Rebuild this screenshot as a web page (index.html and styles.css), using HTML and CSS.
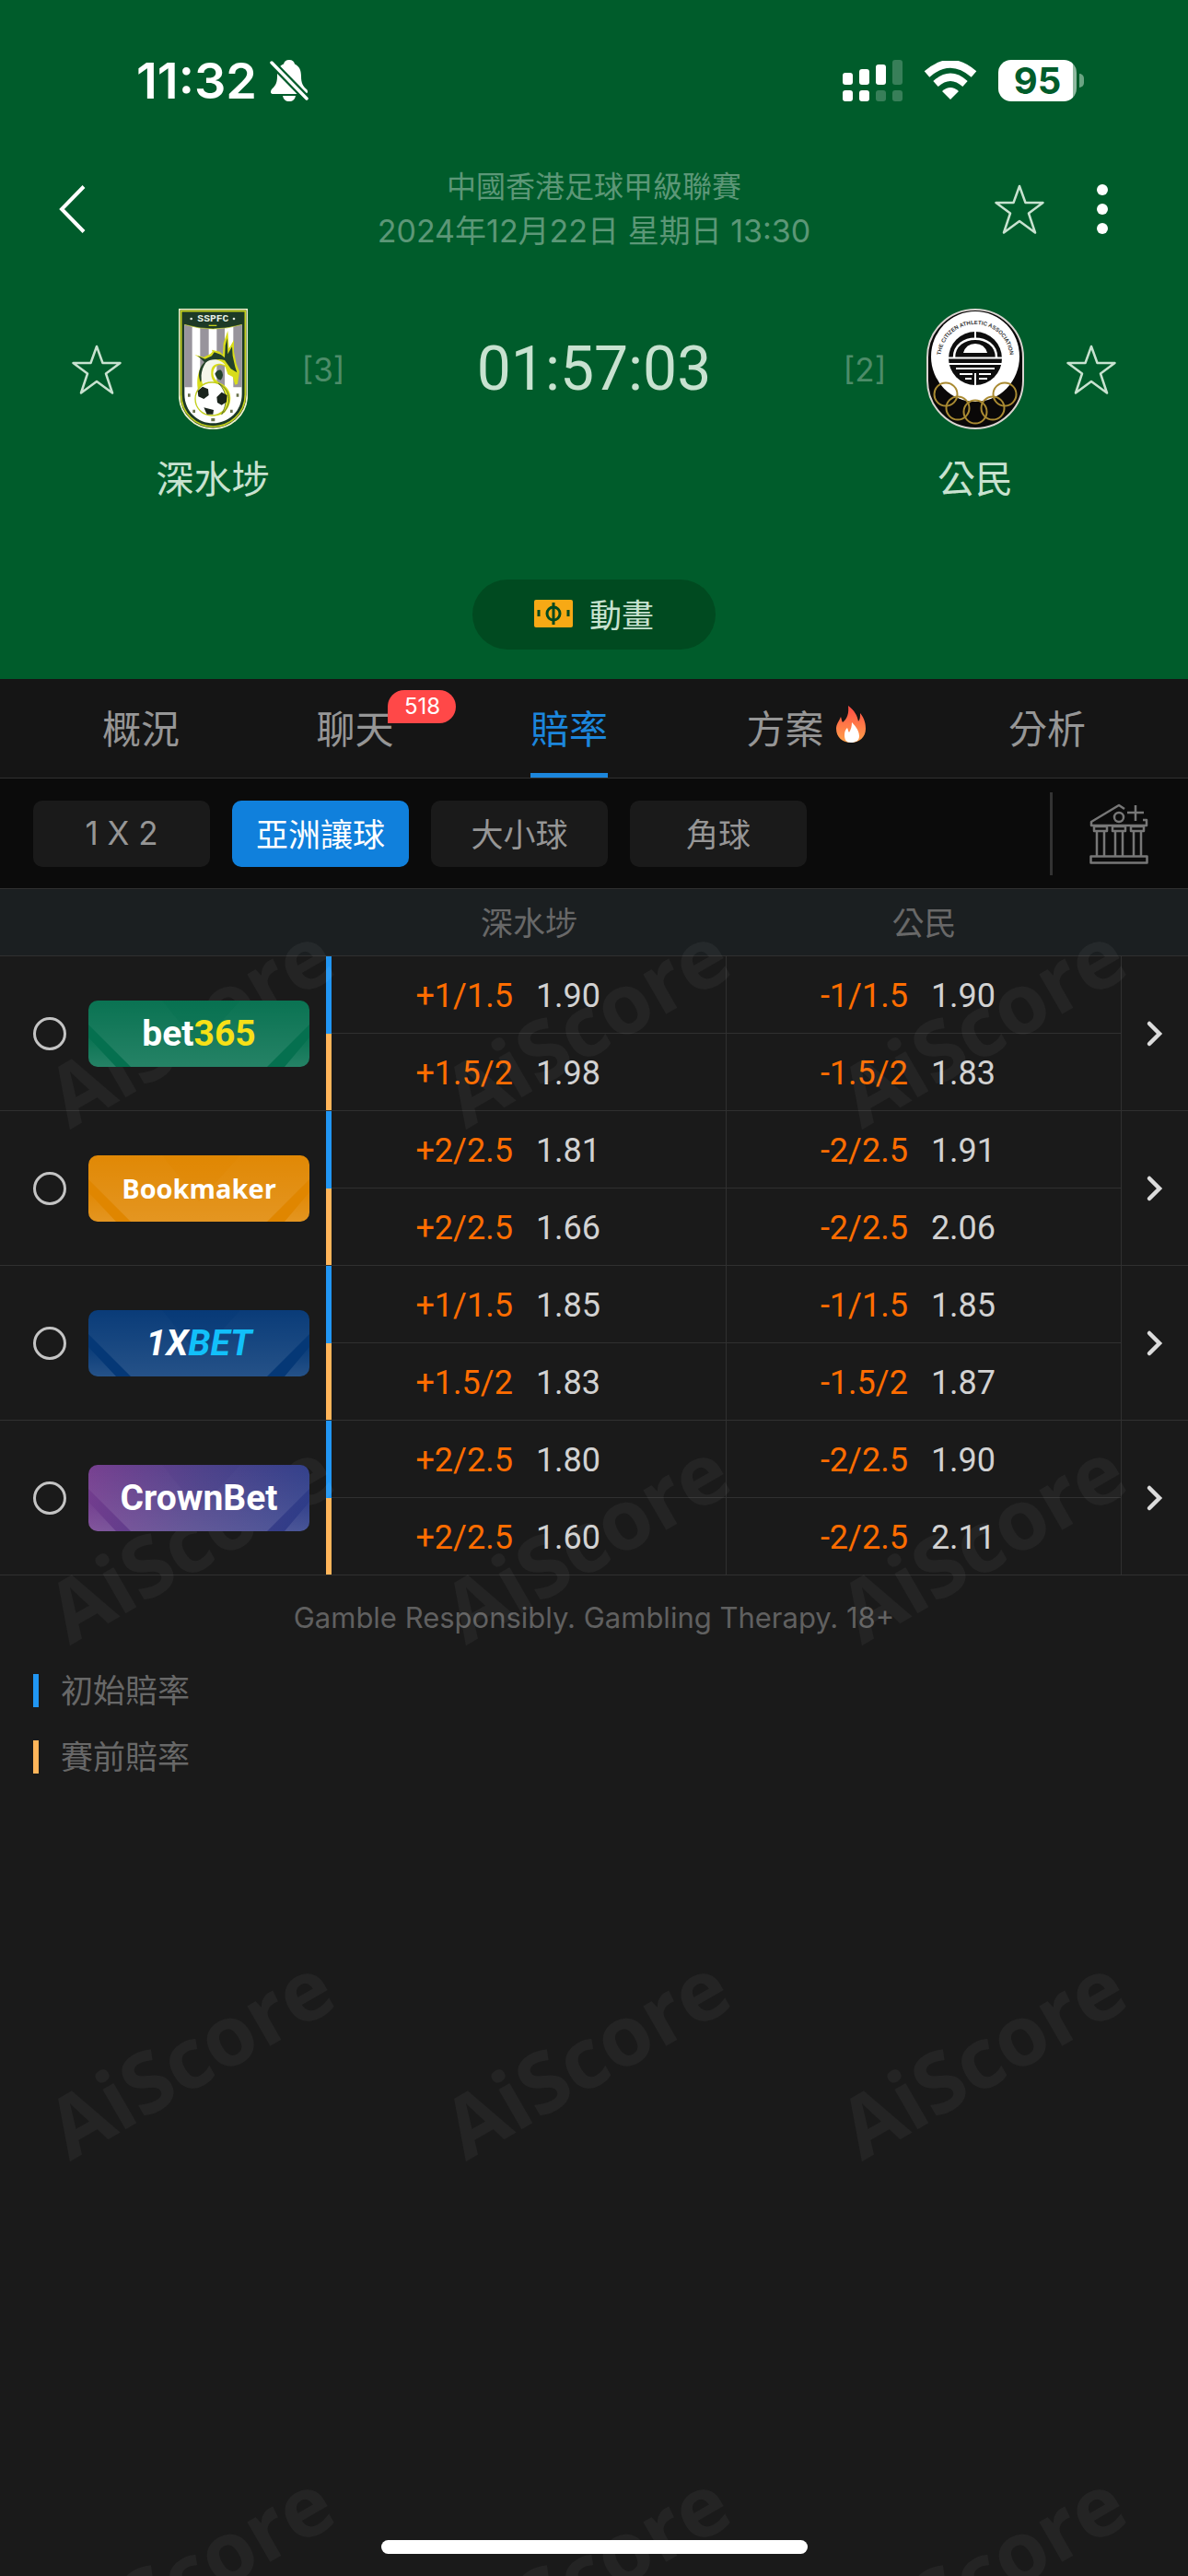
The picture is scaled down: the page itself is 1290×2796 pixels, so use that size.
FILE: index.html
```html
<!DOCTYPE html>
<html lang="zh-Hant">
<head>
    <meta charset="UTF-8">
    <meta name="viewport" content="width=device-width, initial-scale=1.0">
    <title>深水埗 - 公民</title>
    <link rel="stylesheet" href="styles.css">
</head>
<body>
    <!-- shared shapes -->
    <svg class="defs" width="0" height="0" aria-hidden="true">
        <defs>
            <linearGradient id="shine" x1="0" y1="0" x2="0" y2="1">
                <stop offset="0" stop-color="#fff" stop-opacity="0.02"/>
                <stop offset="1" stop-color="#fff" stop-opacity="0.13"/>
            </linearGradient>
            <linearGradient id="flame" x1="0" y1="0" x2="0" y2="1">
                <stop offset="0" stop-color="#ff4b45"/>
                <stop offset="1" stop-color="#ffa24a"/>
            </linearGradient>
        </defs>
        <symbol id="star" viewBox="0 0 54 54">
            <path d="M27 2L33.500 20H52.500L37 31.500L44 52.500L27 40L10 52.500L17 31.500L1.500 20H20.500Z" fill="none" stroke="currentColor" stroke-width="2.500" stroke-linejoin="round"/>
        </symbol>
        <symbol id="arrow" viewBox="0 0 20 30">
            <path d="M4 4L15 15L4 26" fill="none" stroke="currentColor" stroke-width="4.500" stroke-linecap="round"/>
        </symbol>
        <symbol id="plate" viewBox="0 0 240 72">
            <path d="M0 0H80L120 50L165 0H240V26L194 72H46L0 26Z" fill="url(#shine)"/>
            <path d="M80 0H165L120 50Z" fill="url(#shine)" opacity="0.5"/>
            <path d="M0 40L30 72H0ZM240 40V72H213Z" fill="url(#shine)"/>
        </symbol>
    </svg>

    <header class="match-header">
        <div class="status-bar">
            <div class="clock">
                <span>11:32</span>
                <svg class="bell" viewBox="0 0 42 46">
                    <path d="M21 1C17.500 1 15.500 3 15 5.500C9 8 8 13 8 19C8 27 5 30 2 33C0 36 1 38 4 38H38C41 38 42 35 40 33C36 30 34 26 34 19C34 12 32 8 27 5.500C26.500 3 24.500 1 21 1Z" fill="#fff"/>
                    <path d="M14 40H28C27 44 25 46 21 46S15 44 14 40Z" fill="#fff"/>
                    <path d="M2 4L40 43" stroke="#005c2b" stroke-width="8"/>
                    <path d="M2 4L40 43" stroke="#fff" stroke-width="3.500" stroke-linecap="round"/>
                </svg>
            </div>
            <div class="indicators">
                <svg class="signal" viewBox="0 0 65 45" fill="#fff">
                    <rect x="0" y="14" width="11" height="13" rx="3"/>
                    <rect x="18" y="10" width="11" height="17" rx="3"/>
                    <rect x="36" y="5" width="11" height="22" rx="3"/>
                    <rect x="54" y="0" width="11" height="27" rx="3" opacity="0.22"/>
                    <rect x="0" y="33" width="11" height="12" rx="3"/>
                    <rect x="18" y="33" width="11" height="12" rx="3"/>
                    <rect x="36" y="33" width="11" height="12" rx="3" opacity="0.22"/>
                    <rect x="54" y="33" width="11" height="12" rx="3" opacity="0.22"/>
                </svg>
                <svg class="wifi" viewBox="0 0 58 42">
                    <path d="M3.500 14.500Q29 -8 54.500 14.500" fill="none" stroke="#fff" stroke-width="8.500"/>
                    <path d="M13 25Q29 10.500 45 25" fill="none" stroke="#fff" stroke-width="8"/>
                    <path d="M20 33Q29 25 38 33L29 42Z" fill="#fff"/>
                </svg>
                <div class="battery"><span>95</span></div>
            </div>
        </div>

        <nav class="match-nav">
            <button class="icon-btn back" aria-label="返回">
                <svg viewBox="0 0 30 52"><path d="M28 1.500L4 26L28 50.500" fill="none" stroke="#fff" stroke-width="4"/></svg>
            </button>
            <div class="league">
                <div>中國香港足球甲級聯賽</div>
                <div class="kickoff">2024年12月22日 星期日 13:30</div>
            </div>
            <div class="nav-actions">
                <button class="icon-btn fav" aria-label="收藏"><svg><use href="#star"/></svg></button>
                <button class="icon-btn more" aria-label="更多"><i></i><i></i><i></i></button>
            </div>
        </nav>

        <section class="scoreboard">
            <button class="icon-btn fav" aria-label="收藏深水埗"><svg><use href="#star"/></svg></button>
            <svg class="crest-home" viewBox="0 0 225 393">
                <path d="M2 2H223V280C223 345 170 391 112 391S2 345 2 280Z" fill="#1d3a26" stroke="#f3f5cf" stroke-width="5"/>
                <path d="M8 8H217V280C217 342 166 384 112 384S8 342 8 280Z" fill="none" stroke="#c3cf1c" stroke-width="5"/>
                <path d="M19 52Q112 80 206 52V278C206 336 160 373 112 373S19 336 19 278Z" fill="#fff"/>
                <path d="M19 52L44 59V256H19ZM70 63L98 66V256H70ZM124 66L150 63V256H124ZM178 59L206 52V256H178Z" fill="#98949c"/>
                <path d="M19 52Q112 80 206 52" fill="none" stroke="#c3cf1c" stroke-width="2"/>
                <text x="112" y="42" text-anchor="middle" class="crest-text">SSPFC</text>
                <circle cx="41" cy="33" r="4" fill="#dfe8dc"/>
                <circle cx="180" cy="33" r="4" fill="#dfe8dc"/>
                <path d="M98 55H124" stroke="#c3cf1c" stroke-width="4"/>
                <!-- dragon -->
                <path d="M52 150L82 158C95 150 103 150 110 140L108 134L134 140L144 150L146 112L160 72L164 130L180 102V140L188 180L198 205L192 245L184 248L176 222L160 214L152 190C140 178 120 182 114 200C108 220 120 236 138 244C178 262 176 310 150 338C124 356 92 350 76 334L62 260C56 220 70 186 88 172Z" fill="#d8dc1a"/>
                <path d="M62 154L86 164L108 154L116 142L138 150L150 160L152 120L158 96L160 148L174 124L176 154L184 190L190 208L170 196L150 168C118 158 92 176 82 200L72 240C58 210 72 186 84 174Z" fill="#23412a"/>
                <path d="M88 176C110 158 138 166 152 184C124 172 106 184 106 206C104 226 114 240 128 250L88 262C66 234 72 200 88 176Z" fill="#f4f6ea"/>
                <path d="M118 212Q126 198 138 200Q150 214 138 232Q126 234 118 212Z" fill="#23412a"/>
                <circle cx="108" cy="294" r="54" fill="#fff" stroke="#c3cf1c" stroke-width="4"/>
                <path d="M130 244C176 268 170 318 140 344C158 312 160 272 130 244Z" fill="#e4e82a" stroke="#23412a" stroke-width="2"/>
                <path d="M62 268L78 254L96 262L98 282L82 294L64 286ZM124 288L140 272L158 282L156 304L140 314L126 306ZM82 322L114 330L112 344H92Z" fill="#1a241c"/>
                <path d="M30 282H38M188 282H196M46 334H54M168 334H176M106 362H118" stroke="#68714b" stroke-width="10"/>
            </svg>
            <span class="rank">[3]</span>
            <div class="countdown">01:57:03</div>
            <span class="rank">[2]</span>
            <svg class="crest-away" viewBox="0 0 106 131">
                <defs><path id="arc" d="M15 62C11 2 95 2 91 62"/></defs>
                <rect x="1" y="1" width="104" height="129" rx="52" fill="#0a0808" stroke="#d9d4d0" stroke-width="2"/>
                <ellipse cx="53" cy="52" rx="48" ry="49" fill="#fff"/>
                <text class="arc-text"><textPath href="#arc" startOffset="50%" text-anchor="middle">THE CITIZEN ATHLETIC ASSOCIATION</textPath></text>
                <circle cx="53" cy="54" r="29" fill="#0d0d0d"/>
                <g stroke="#fff" fill="none">
                    <path d="M53 24V33M24 53.500H82M24 60H34M72 60H82M53 70V84" stroke-width="2"/>
                    <path d="M30 53C30 26 76 26 76 53" stroke-width="2.500"/>
                    <path d="M34 60H72M32 65H74M36 71H50M57 71H70M42 76H49M57 76H66" stroke-width="2"/>
                </g>
                <path d="M40 48Q43 38 53 38T66 48Z" fill="#fff"/>
                <g fill="none" stroke="#a98a32" stroke-width="2">
                    <circle cx="21" cy="93" r="12.500"/>
                    <circle cx="34" cy="108" r="12.500"/>
                    <circle cx="53" cy="112" r="12.500"/>
                    <circle cx="72" cy="108" r="12.500"/>
                    <circle cx="85" cy="93" r="12.500"/>
                </g>
            </svg>
            <button class="icon-btn fav" aria-label="收藏公民"><svg><use href="#star"/></svg></button>
            <div class="team-name home">深水埗</div>
            <div class="team-name away">公民</div>
        </section>

        <button class="live-btn">
            <svg viewBox="0 0 42 30">
                <rect width="42" height="30" rx="2" fill="#f7a915"/>
                <path d="M21 3V27M5 11V18M37 11V18" stroke="#00491f" stroke-width="3"/>
                <circle cx="21" cy="15" r="7" fill="none" stroke="#00491f" stroke-width="3"/>
            </svg>
            動畫
        </button>
    </header>

    <nav class="tabs">
        <a href="#">概況</a>
        <a href="#">聊天<span class="badge">518</span></a>
        <a href="#" class="active">賠率</a>
        <a href="#" class="hot">方案
            <svg class="fire" viewBox="0 0 32 40">
                <path d="M13 0C20 5 23 11 24 17C26 15 26 12 26 8C31 14 32 20 32 25C32 34 25 40 16 40S0 34 0 25C0 20 3 17 5 12C6 15 6 17 7 18C12 14 14 8 13 0Z" fill="url(#flame)"/>
                <path d="M17 18C22 23 25 28 25 33C25 38 21 40 16 40S9 37 9 32C9 28 10 26 12 24C13 26 13 28 14 29C16 26 17 22 17 18Z" fill="#fff"/>
            </svg>
        </a>
        <a href="#">分析</a>
    </nav>

    <div class="filters">
        <button>1 X 2</button>
        <button class="active">亞洲讓球</button>
        <button>大小球</button>
        <button>角球</button>
        <button class="icon-btn company" aria-label="選擇公司">
            <svg viewBox="0 0 64 66" fill="none" stroke="#777" stroke-width="2.500" stroke-linejoin="round">
                <path d="M38 6L32 2L2 20V24H62V18H58M50 2V19M41 10H59"/>
                <circle cx="32" cy="15" r="5"/>
                <path d="M5 25H19V30H5ZM25 25H39V30H25ZM45 25H59V30H45Z"/>
                <path d="M8 30V57M16 30V57M28 30V57M36 30V57M48 30V57M56 30V57"/>
                <rect x="1.500" y="57.500" width="61" height="7"/>
            </svg>
        </button>
    </div>

    <main class="odds">
        <table class="odds-table">
            <colgroup>
                <col class="col-company">
                <col>
                <col>
                <col class="col-more">
            </colgroup>
            <thead>
                <tr>
                    <th></th>
                    <th>深水埗</th>
                    <th>公民</th>
                    <th></th>
                </tr>
            </thead>
            <tbody>
                <tr>
                    <td rowspan="2"><label class="company-cell"><input type="radio" name="company"><span class="logo bet365"><svg><use href="#plate"/></svg><b>bet<em>365</em></b></span></label></td>
                    <td><div class="pair"><span>+1/1.5</span><strong>1.90</strong></div></td>
                    <td><div class="pair"><span>-1/1.5</span><strong>1.90</strong></div></td>
                    <td rowspan="2"><button class="icon-btn go" aria-label="bet365"><svg><use href="#arrow"/></svg></button></td>
                </tr>
                <tr>
                    <td><div class="pair"><span>+1.5/2</span><strong>1.98</strong></div></td>
                    <td><div class="pair"><span>-1.5/2</span><strong>1.83</strong></div></td>
                </tr>
                <tr>
                    <td rowspan="2"><label class="company-cell"><input type="radio" name="company"><span class="logo bookmaker"><svg><use href="#plate"/></svg><b>Bookmaker</b></span></label></td>
                    <td><div class="pair"><span>+2/2.5</span><strong>1.81</strong></div></td>
                    <td><div class="pair"><span>-2/2.5</span><strong>1.91</strong></div></td>
                    <td rowspan="2"><button class="icon-btn go" aria-label="Bookmaker"><svg><use href="#arrow"/></svg></button></td>
                </tr>
                <tr>
                    <td><div class="pair"><span>+2/2.5</span><strong>1.66</strong></div></td>
                    <td><div class="pair"><span>-2/2.5</span><strong>2.06</strong></div></td>
                </tr>
                <tr>
                    <td rowspan="2"><label class="company-cell"><input type="radio" name="company"><span class="logo onexbet"><svg><use href="#plate"/></svg><b>1X<em>BET</em></b></span></label></td>
                    <td><div class="pair"><span>+1/1.5</span><strong>1.85</strong></div></td>
                    <td><div class="pair"><span>-1/1.5</span><strong>1.85</strong></div></td>
                    <td rowspan="2"><button class="icon-btn go" aria-label="1XBET"><svg><use href="#arrow"/></svg></button></td>
                </tr>
                <tr>
                    <td><div class="pair"><span>+1.5/2</span><strong>1.83</strong></div></td>
                    <td><div class="pair"><span>-1.5/2</span><strong>1.87</strong></div></td>
                </tr>
                <tr>
                    <td rowspan="2"><label class="company-cell"><input type="radio" name="company"><span class="logo crownbet"><svg><use href="#plate"/></svg><b>CrownBet</b></span></label></td>
                    <td><div class="pair"><span>+2/2.5</span><strong>1.80</strong></div></td>
                    <td><div class="pair"><span>-2/2.5</span><strong>1.90</strong></div></td>
                    <td rowspan="2"><button class="icon-btn go" aria-label="CrownBet"><svg><use href="#arrow"/></svg></button></td>
                </tr>
                <tr>
                    <td><div class="pair"><span>+2/2.5</span><strong>1.60</strong></div></td>
                    <td><div class="pair"><span>-2/2.5</span><strong>2.11</strong></div></td>
                </tr>
            </tbody>
        </table>

        <p class="notice">Gamble Responsibly. Gambling Therapy. 18+</p>

        <ul class="legend">
            <li>初始賠率</li>
            <li class="pre">賽前賠率</li>
        </ul>

        <div class="home-indicator"></div>

        <svg class="watermark" aria-hidden="true">
            <defs>
                <pattern id="mark" width="430" height="560" y="58" patternUnits="userSpaceOnUse">
                    <text x="76" y="204" transform="rotate(-30 76 204)">AiScore</text>
                </pattern>
            </defs>
            <rect y="58" width="100%" height="100%" fill="url(#mark)"/>
        </svg>
    </main>
</body>
</html>
```
FILE: styles.css
```css
* {
    margin: 0;
    padding: 0;
    box-sizing: border-box;
}

body {
    min-height: 100vh;
    display: flex;
    flex-direction: column;
    background: #1a1a1a;
    color: #969696;
    font-family: Inter, "Noto Sans CJK TC", sans-serif;
    font-size: 35px;
}

button {
    border: none;
    background: none;
    color: inherit;
    font: inherit;
    cursor: pointer;
}

a {
    color: inherit;
    text-decoration: none;
}

svg {
    display: block;
}

.defs {
    position: absolute;
}

.icon-btn svg {
    width: 100%;
    height: 100%;
}

/* header */
.match-header {
    background: #005c2b;
    color: #c8e2d0;
    padding-bottom: 32px;
}

.status-bar {
    height: 174px;
    padding: 0 113px 0 148px;
    display: flex;
    justify-content: space-between;
    align-items: center;
    color: #fff;
}

.clock {
    display: flex;
    align-items: center;
    gap: 14px;
    font-size: 54px;
    font-weight: 600;
}

.bell {
    width: 42px;
    height: 46px;
}

.indicators {
    display: flex;
    align-items: center;
    gap: 23px;
}

.signal {
    width: 65px;
    height: 45px;
}

.wifi {
    width: 58px;
    height: 42px;
}

.battery {
    position: relative;
    width: 85px;
    height: 45px;
    margin-right: 8px;
    border-radius: 14px;
    background: linear-gradient(90deg, #fff 81px, #8fb89f 81px);
    color: #005c2b;
    font-size: 40px;
    font-weight: 700;
    line-height: 45px;
    text-align: center;
}

.battery::after {
    content: "";
    position: absolute;
    right: -8px;
    top: 15px;
    width: 5px;
    height: 15px;
    border-radius: 0 5px 5px 0;
    background: #6ba483;
}

.match-nav {
    height: 106px;
    padding: 0 63px;
    display: grid;
    grid-template-columns: 1fr auto 1fr;
    align-items: center;
}

.back {
    width: 30px;
    height: 52px;
}

.league {
    color: #5c9777;
    font-size: 32px;
    line-height: 48px;
    text-align: center;
}

.kickoff {
    font-size: 34px;
}

.nav-actions {
    justify-self: end;
    display: flex;
    align-items: center;
    gap: 57px;
    margin-right: 24px;
}

.fav {
    width: 54px;
    height: 54px;
}

.more {
    height: 54px;
    display: flex;
    flex-direction: column;
    justify-content: space-between;
}

.more i {
    width: 12px;
    height: 12px;
    border-radius: 50%;
    background: #fff;
}

.scoreboard {
    margin-top: 55px;
    padding: 0 78px;
    display: grid;
    grid-template-columns: 54px 124px 42px 1fr 42px 124px 54px;
    grid-template-rows: 131px 50px;
    column-gap: 37px;
    row-gap: 29px;
    align-items: center;
    justify-items: center;
}

.crest-home {
    width: 75px;
    height: 131px;
}

.crest-text {
    fill: #e6efe4;
    font-family: "Liberation Mono", monospace;
    font-size: 34px;
    font-weight: 700;
}

.crest-away {
    width: 106px;
    height: 131px;
}

.arc-text {
    fill: #333;
    font-family: "Liberation Sans", sans-serif;
    font-size: 6px;
    font-weight: 700;
}

.rank {
    color: #4d8c69;
    font-size: 35px;
    white-space: nowrap;
}

.countdown {
    font-family: Roboto, sans-serif;
    font-size: 66px;
}

.team-name {
    font-size: 41px;
    line-height: 50px;
}

.team-name.home {
    grid-column: 2;
}

.team-name.away {
    grid-column: 6;
}

.live-btn {
    margin: 84px auto 0;
    width: 264px;
    height: 76px;
    padding-bottom: 3px;
    display: flex;
    justify-content: center;
    align-items: center;
    gap: 18px;
    border-radius: 38px;
    background: #004a20;
}

.live-btn svg {
    width: 42px;
    height: 30px;
}

/* tabs */
.tabs {
    height: 108px;
    padding: 0 111px;
    display: flex;
    justify-content: space-between;
    background: #151515;
    border-bottom: 1px solid #303030;
    font-size: 42px;
}

.tabs a {
    position: relative;
    display: flex;
    align-items: center;
    gap: 14px;
    padding-bottom: 4px;
}

.tabs .active {
    color: #1c86dc;
    border-bottom: 5px solid #1c86dc;
    border-top: 5px solid transparent;
}

.tabs .hot {
    padding-left: 2px;
    padding-right: 6px;
}

.badge {
    position: absolute;
    left: 78px;
    top: 12px;
    width: 74px;
    height: 36px;
    border-radius: 18px 18px 18px 0;
    background: #ff4848;
    color: #fff;
    font-size: 24px;
    line-height: 36px;
    text-align: center;
}

.fire {
    width: 32px;
    height: 40px;
    margin-bottom: 6px;
}

/* filters */
.filters {
    height: 119px;
    padding-left: 36px;
    display: flex;
    align-items: center;
    gap: 24px;
    background: #0b0b0b;
}

.filters button:not(.company) {
    width: 192px;
    height: 72px;
    padding-bottom: 2px;
    border-radius: 10px;
    background: #1a1a1a;
}

.filters button.active:not(.company) {
    background: #1080dc;
    color: #fff;
}

.filters .company {
    margin-left: auto;
    width: 150px;
    height: 90px;
    padding: 12px 43px 12px 40px;
    border-left: 3px solid #333;
}

/* odds */
.odds {
    position: relative;
    flex: 1;
    display: flex;
    flex-direction: column;
    overflow: hidden;
}

.odds-table {
    width: 100%;
    table-layout: fixed;
    border-spacing: 0;
    font-family: Roboto, "Noto Sans CJK TC", sans-serif;
}

.col-company {
    width: 360px;
}

.col-more {
    width: 72px;
}

.odds-table th {
    height: 74px;
    padding-bottom: 3px;
    background: #1b1f21;
    border-top: 1px solid #303030;
    border-bottom: 1px solid #303030;
    color: #686868;
    font-weight: 400;
}

.odds-table td {
    height: 84px;
    padding-top: 2px;
    border-bottom: 1px solid #303030;
    border-right: 1px solid #303030;
}

.odds-table td[rowspan] {
    padding-top: 0;
    border-right: none;
}

/* opening odds on top, pre-match odds below */
.odds-table td[rowspan]:first-child {
    background: linear-gradient(#2196f3 50%, #ffb55a 50%) right / 6px 100% no-repeat border-box;
}

.pair {
    display: flex;
    gap: 25px;
    font-size: 36px;
}

.pair span {
    flex: 0 0 46%;
    color: #ff6d00;
    text-align: right;
}

.pair strong {
    color: #d2d2d2;
    font-weight: 400;
}

.company-cell {
    display: flex;
    align-items: center;
    gap: 24px;
    padding-left: 36px;
}

.company-cell input {
    appearance: none;
    width: 36px;
    height: 36px;
    border: 3px solid #c4c4c4;
    border-radius: 50%;
}

.logo {
    position: relative;
    z-index: 2;
    width: 240px;
    height: 72px;
    border-radius: 10px;
    overflow: hidden;
    display: flex;
    align-items: center;
    justify-content: center;
    color: #fff;
    font-size: 39px;
}

.logo svg {
    position: absolute;
    inset: 0;
    width: 100%;
    height: 100%;
}

.logo b {
    position: relative;
}

.logo em {
    font-style: inherit;
}

.bet365 { background: #05704f; }
.bet365 em { color: #f7e017; }
.bookmaker { background: #e08600; font-family: "Open Sans", sans-serif; font-size: 29px; }
.onexbet { background: #053876; font-style: italic; }
.onexbet em { color: #12c0fa; }
.crownbet { background: linear-gradient(100deg, #743c8e, #4c4089 50%, #2c3c88); }

.go {
    display: block;
    width: 20px;
    height: 30px;
    margin: 0 auto;
    color: #dcdcdc;
}

.notice {
    margin-top: 26px;
    color: #606060;
    font-size: 31px;
    line-height: 40px;
    text-align: center;
}

.legend {
    margin-top: 41px;
    padding-left: 36px;
    list-style: none;
    color: #686868;
}

.legend li {
    height: 36px;
    margin-bottom: 36px;
    padding-left: 24px;
    border-left: 6px solid #2196f3;
    line-height: 36px;
}

.legend .pre {
    border-color: #ffb55a;
}

.home-indicator {
    width: 463px;
    height: 15px;
    margin: auto auto 24px;
    border-radius: 8px;
    background: #fff;
    position: relative;
    z-index: 2;
}

.watermark {
    position: absolute;
    inset: 0;
    width: 100%;
    height: 100%;
    pointer-events: none;
}

.watermark text {
    fill: rgba(255, 255, 255, 0.045);
    font-family: "Open Sans", sans-serif;
    font-size: 91px;
    font-weight: 700;
}
```
